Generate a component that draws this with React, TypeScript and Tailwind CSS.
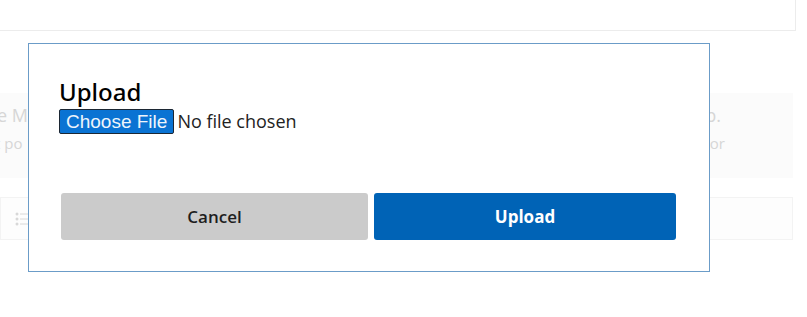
export default function App() {
  return (
    <div className="relative h-[317px] w-[807px] overflow-hidden bg-white font-['Open_Sans',sans-serif]">
      {/* faded page behind the dialog */}
      <div className="h-[31px] w-[796px] border-b border-r border-[#ececec] bg-white" />
      <div className="mt-[62px] flex h-[85px] w-[793px] flex-col gap-[2px] bg-[#fbfbfb] pt-[8px] text-[#d6d6d6]">
        <div className="flex justify-between pr-[72px] text-[18px] leading-[28px]">
          <span className="-ml-[3px]">e M</span>
          <span>p.</span>
        </div>
        <div className="flex justify-between pr-[68px] text-[15px] leading-[24px]">
          <span className="-ml-[5px]">t po</span>
          <span>or</span>
        </div>
      </div>
      <div className="mt-[19px] flex h-[43px] w-[793px] items-center border border-[#f3f3f3] bg-[#fdfdfd] pl-[14px]">
        <svg width="14" height="16" viewBox="0 0 14 16" className="text-[#d8d8d8]">
          <circle cx="2" cy="3" r="1.5" fill="currentColor" />
          <circle cx="2" cy="8" r="1.5" fill="currentColor" />
          <circle cx="2" cy="13" r="1.5" fill="currentColor" />
          <path d="M5 3h9M5 8h9M5 13h9" stroke="currentColor" strokeWidth="1" />
        </svg>
      </div>

      {/* dialog */}
      <div className="absolute left-[28px] top-[43px] h-[229px] w-[682px] border border-[#6b9cc8] bg-white pl-[30px] pt-[34px]">
        <h2 className="font-['Noto_Sans',sans-serif] text-[24px] font-medium leading-[28px] text-black">Upload</h2>
        <div className="mt-[2px] flex items-center">
          <button className="h-[25px] rounded-[2px] border border-[#1c2733] bg-[#0a73d3] px-[6px] font-['Liberation_Sans',sans-serif] text-[19px] leading-[22px] text-[#eef5fc]">
            Choose File
          </button>
          <span className="ml-[3px] text-[18px] text-[#222]">No file chosen</span>
        </div>
        <div className="ml-[2px] mt-[58px] flex gap-[6px]">
          <button className="h-[47px] w-[307px] rounded-[3px] bg-[#cbcbcb] text-[17px] font-semibold text-[#1e1e1e]">
            Cancel
          </button>
          <button className="h-[47px] w-[302px] rounded-[3px] bg-[#0063b6] text-[17px] font-bold text-white">
            Upload
          </button>
        </div>
      </div>
    </div>
  )
}
